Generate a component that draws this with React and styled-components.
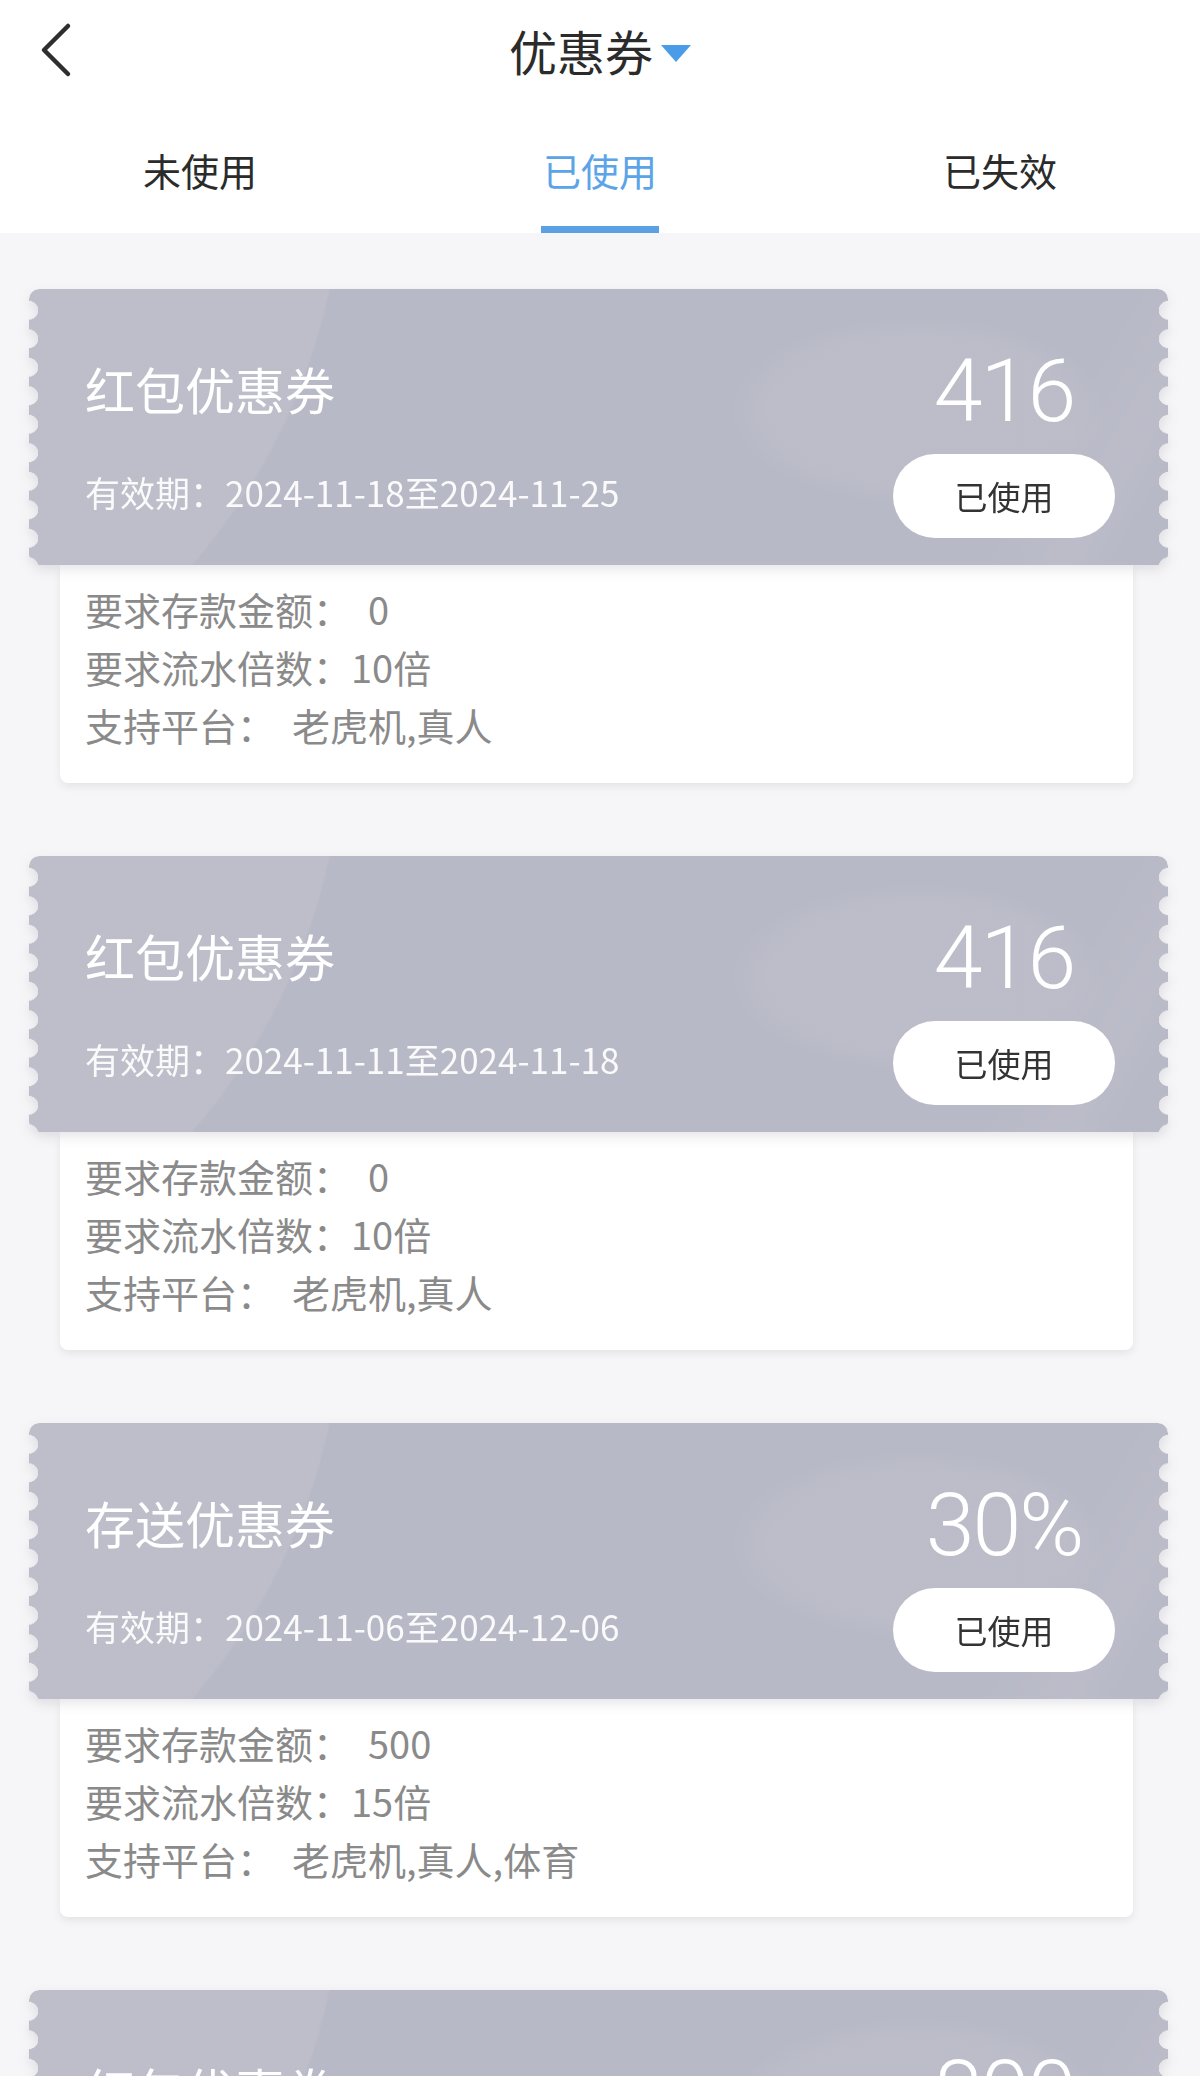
import React from "react";
import styled, { createGlobalStyle } from "styled-components";

const GlobalStyle = createGlobalStyle`
  html, body { margin: 0; padding: 0; }
  body {
    background: #f6f6f8;
    font-family: "Noto Sans CJK SC", "Noto Sans", sans-serif;
    color: #333;
  }
`;

const Page = styled.div`
  width: 1200px;
  min-height: 2076px;
  background: #f6f6f8;
`;

const TopArea = styled.header`
  background: #ffffff;
`;

const NavBar = styled.div`
  height: 100px;
  display: flex;
  align-items: center;
  justify-content: center;
  position: relative;
`;

const BackButton = styled.button`
  position: absolute;
  left: 30px;
  top: 18px;
  width: 50px;
  height: 64px;
  border: 0;
  padding: 0;
  background: transparent;
  display: flex;
  align-items: center;
  justify-content: center;
`;

const TitleGroup = styled.div`
  display: flex;
  align-items: center;
  gap: 8px;
`;

const Title = styled.h1`
  margin: 0;
  font-size: 48px;
  line-height: 60px;
  font-weight: 400;
  color: #2b2b2b;
`;

const Caret = styled.span`
  width: 0;
  height: 0;
  border-left: 15px solid transparent;
  border-right: 15px solid transparent;
  border-top: 17px solid #4a9ce9;
  margin-top: 6px;
`;

const Tabs = styled.nav`
  display: grid;
  grid-template-columns: repeat(3, 1fr);
  height: 133px;
`;

const Tab = styled.div`
  display: flex;
  flex-direction: column;
  align-items: center;
  padding-top: 45px;
  font-size: 38px;
  line-height: 50px;
  color: ${(p) => (p.$active ? "#5ba4e8" : "#2b2b2b")};
`;

const TabLine = styled.span`
  margin-top: 31px;
  width: 118px;
  height: 7px;
  background: ${(p) => (p.$active ? "#5ba0e2" : "transparent")};
`;

const List = styled.main`
  display: flex;
  flex-direction: column;
  gap: 73px;
  padding: 56px 32px 0 29px;
`;

const Coupon = styled.section`
  display: flex;
  flex-direction: column;
`;

const TicketShadow = styled.div`
  position: relative;
  z-index: 1;
  filter: drop-shadow(0 5px 6px rgba(60, 60, 80, 0.12));
`;

const Ticket = styled.div`
  height: 276px;
  border-radius: 10px;
  display: flex;
  justify-content: space-between;
  padding: 0 53px 0 56px;
  box-sizing: border-box;
  background:
    radial-gradient(circle 615px at -300px -127px, rgba(255, 255, 255, 0.07) 99.6%, rgba(255, 255, 255, 0) 100%),
    radial-gradient(ellipse 190px 95px at 78% 44%, rgba(255, 255, 255, 0.05) 80%, rgba(255, 255, 255, 0) 100%),
    linear-gradient(120deg, rgba(255, 255, 255, 0) 85%, rgba(255, 255, 255, 0.05) 92%, rgba(255, 255, 255, 0) 96%),
    #b8b9c6;
  -webkit-mask:
    radial-gradient(circle 9.5px at 0 50%, transparent 95%, #000 100%) 0 7px / 51% 28.5px repeat-y,
    radial-gradient(circle 9.5px at 100% 50%, transparent 95%, #000 100%) 100% 7px / 51% 28.5px repeat-y;
  mask:
    radial-gradient(circle 9.5px at 0 50%, transparent 95%, #000 100%) 0 7px / 51% 28.5px repeat-y,
    radial-gradient(circle 9.5px at 100% 50%, transparent 95%, #000 100%) 100% 7px / 51% 28.5px repeat-y;
`;

const TicketInfo = styled.div`
  display: flex;
  flex-direction: column;
  padding-top: 69px;
`;

const TicketName = styled.h2`
  margin: 0;
  font-size: 50px;
  line-height: 60px;
  font-weight: 400;
  color: #ffffff;
`;

const Validity = styled.p`
  margin: 52px 0 0;
  font-size: 35px;
  line-height: 44px;
  color: rgba(255, 255, 255, 0.92);
`;

const ValueColumn = styled.div`
  width: 222px;
  display: flex;
  flex-direction: column;
  align-items: center;
  padding-top: 52px;
`;

const Amount = styled.div`
  font-family: Roboto, "Noto Sans", sans-serif;
  font-weight: 300;
  font-size: 88px;
  line-height: 100px;
  letter-spacing: -2px;
  color: #ffffff;
`;

const StatusButton = styled.button`
  margin-top: 13px;
  width: 222px;
  height: 84px;
  border: 0;
  border-radius: 42px;
  background: #ffffff;
  font-family: "Noto Sans CJK SC", sans-serif;
  font-size: 33px;
  color: #333333;
  padding: 0;
`;

const Details = styled.div`
  margin: 0 35px 0 31px;
  background: #ffffff;
  border-radius: 0 0 8px 8px;
  box-shadow: 0 4px 9px rgba(0, 0, 0, 0.07);
  padding: 15px 25px 29px 25px;
  display: flex;
  flex-direction: column;
`;

const DetailRow = styled.div`
  font-size: 38px;
  line-height: 58px;
  color: #8a8a8a;
  white-space: nowrap;
`;

const DetailValue = styled.span`
  margin-left: ${(p) => (p.$spaced ? "17px" : "0")};
`;

const BackIcon = () => (
  <svg width="36" height="56" viewBox="0 0 36 56" fill="none">
    <path d="M31 4 L7 28 L31 52" stroke="#2e2e2e" strokeWidth="4.5" strokeLinecap="round" strokeLinejoin="round" />
  </svg>
);

const coupons = [
  { name: "红包优惠券", from: "2024-11-18", to: "2024-11-25", amount: "416", deposit: "0", rate: "10倍", platforms: "老虎机,真人" },
  { name: "红包优惠券", from: "2024-11-11", to: "2024-11-18", amount: "416", deposit: "0", rate: "10倍", platforms: "老虎机,真人" },
  { name: "存送优惠券", from: "2024-11-06", to: "2024-12-06", amount: "30%", deposit: "500", rate: "15倍", platforms: "老虎机,真人,体育" },
  { name: "红包优惠券", from: "2024-11-01", to: "2024-11-08", amount: "800", deposit: "0", rate: "10倍", platforms: "老虎机,真人" },
];

const tabs = ["未使用", "已使用", "已失效"];

export default function App() {
  return (
    <Page>
      <GlobalStyle />
      <TopArea>
        <NavBar>
          <BackButton aria-label="返回">
            <BackIcon />
          </BackButton>
          <TitleGroup>
            <Title>优惠券</Title>
            <Caret />
          </TitleGroup>
        </NavBar>
        <Tabs>
          {tabs.map((t, i) => (
            <Tab key={t} $active={i === 1}>
              {t}
              <TabLine $active={i === 1} />
            </Tab>
          ))}
        </Tabs>
      </TopArea>
      <List>
        {coupons.map((c, i) => (
          <Coupon key={i}>
            <TicketShadow>
              <Ticket>
                <TicketInfo>
                  <TicketName>{c.name}</TicketName>
                  <Validity>有效期：{c.from}至{c.to}</Validity>
                </TicketInfo>
                <ValueColumn>
                  <Amount>{c.amount}</Amount>
                  <StatusButton>已使用</StatusButton>
                </ValueColumn>
              </Ticket>
            </TicketShadow>
            <Details>
              <DetailRow>
                要求存款金额：<DetailValue $spaced>{c.deposit}</DetailValue>
              </DetailRow>
              <DetailRow>
                要求流水倍数：<DetailValue>{c.rate}</DetailValue>
              </DetailRow>
              <DetailRow>
                支持平台：<DetailValue $spaced>{c.platforms}</DetailValue>
              </DetailRow>
            </Details>
          </Coupon>
        ))}
      </List>
    </Page>
  );
}
